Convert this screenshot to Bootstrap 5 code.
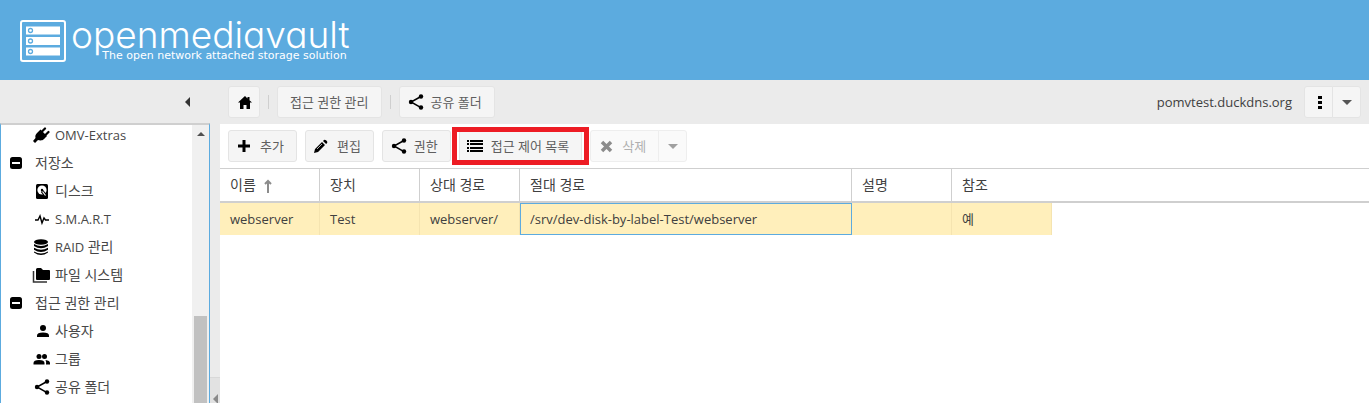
<!DOCTYPE html>
<html lang="ko">
<head>
<meta charset="utf-8">
<meta name="viewport" content="width=device-width, initial-scale=1">
<title>openmediavault</title>
<link href="https://cdn.jsdelivr.net/npm/bootstrap@5.3.0/dist/css/bootstrap.min.css" rel="stylesheet">
<style>
body{font-family:"Open Sans","Noto Sans CJK KR",sans-serif;font-size:13px;line-height:20px;color:#404040;background:#ebebeb}
.brand-bar{height:80px;background:#5cabdf;padding:20px 20px 0;color:#fff}
.brand-title{font-family:Inter,"Liberation Sans",sans-serif;font-feature-settings:"cv11";font-weight:300;font-size:37px;line-height:30px}
.brand-tag{font-family:"DejaVu Sans",sans-serif;font-size:11px;line-height:12px;padding-right:3px}
.side{width:210px}
.bar-top{height:44px}
.tree-box{border:1px solid #5cabdf;border-top:2px solid #cfcfcf;border-bottom:0;background:#fff;margin-top:-1px}
.tree{margin-top:-4px}
.tree a{height:28px;color:#484848;text-decoration:none;padding-left:31px;gap:5px}
.tree a.group{padding-left:6px;gap:12px}
.hangul{font-size:14px}
.tree svg{width:18px;height:18px;flex:none;color:#000}
.tree a.group svg{width:16px;height:16px}
.scroll-track{width:17px;background:#f0f0f0}
.scroll-thumb{background:#c1c1c1;width:13px;height:87px}
.splitter{width:10px}
.split-handle{height:26px;background:#e2e2e2;border-top:1px solid #d8d8d8}
.btn.tool{--bs-btn-bg:#f5f5f5;--bs-btn-color:#5f5f5f;--bs-btn-border-color:#e4e4e4;--bs-btn-disabled-bg:#fafafa;--bs-btn-disabled-color:#b0b0b0;--bs-btn-disabled-border-color:#eeeeee;--bs-btn-disabled-opacity:1;--bs-btn-border-radius:3px;font-size:13px;line-height:20px;height:32px;padding:0 7px;display:inline-flex;align-items:center;gap:6px;white-space:nowrap}
.btn.tool svg{width:18px;height:18px;color:#000;flex:none}
.btn.tool:disabled svg{color:#8c8c8c}
.btn.tool.wide{padding-right:12px}
.btn.tool.plain{padding:0 12px}
.btn.tool.square{width:32px;padding:0;justify-content:center}
.btn.tool.half{width:29px;padding:0;justify-content:center}
.sep{width:1px;height:14px;background:#cfcfcf}
.marked{position:relative}
.marked::after{content:"";position:absolute;inset:-3px -7px;border:5px solid #ed1c24;pointer-events:none}
.shares{table-layout:fixed;border-collapse:separate;border-spacing:0;border-top:1px solid #cfcfcf}
.shares th{height:34px;font-weight:400;font-size:14px;padding:0 10px;border-right:1px solid #cfcfcf;border-bottom:2px solid #cfcfcf}
.shares th:nth-last-child(-n+2){border-right:0}
.shares td{height:32px;padding:0 10px;background:#ffefbb;border-right:1px solid #f5e4b0}
.shares td:last-child{background:#fff;border:0}
.shares td.focus-cell{border:1px solid #5cabdf;padding-left:9px}
.c-std{width:100px}.c-path{width:332px}
</style>
</head>
<body class="vh-100 d-flex flex-column overflow-hidden">
<svg class="d-none" xmlns="http://www.w3.org/2000/svg">
<symbol id="share" viewBox="0 0 18 18"><path d="M14 3.500 4 9l10 5.700" fill="none" stroke="currentColor" stroke-width="1.500"/><circle cx="14" cy="3.500" r="2.200"/><circle cx="4" cy="9" r="2.200"/><circle cx="14" cy="14.500" r="2.200"/></symbol>
<symbol id="minus" viewBox="0 0 16 16"><rect x="3" y="2" width="12" height="12" rx="2.500"/><path d="M5 8h8" stroke="#fff" stroke-width="2"/></symbol>
<symbol id="down" viewBox="0 0 18 18"><path d="M4 7h10l-5 5z"/></symbol>
</svg>
<header class="brand-bar d-flex align-items-start gap-1">
<svg width="47" height="43" viewBox="0 0 47 43" aria-hidden="true"><rect x="1" y="1" width="44" height="40" rx="2" fill="none" stroke="#fff" stroke-width="2"/><path d="M6 6.500h34v8H6zm0 10.500h34v8H6zm0 10.500h34v8H6z" fill="#fff"/><g fill="none" stroke="#5cabdf" stroke-width="1.300"><circle cx="10.500" cy="10.500" r="2"/><circle cx="10.500" cy="21" r="2"/><circle cx="10.500" cy="31.500" r="2"/></g></svg>
<div class="text-end"><div class="brand-title">openmediavault</div><div class="brand-tag">The open network attached storage solution</div></div>
</header>
<div class="d-flex flex-grow-1 overflow-hidden">
<aside class="side d-flex flex-column flex-shrink-0">
<div class="bar-top d-flex align-items-center justify-content-end pe-3 flex-shrink-0"><svg width="10" height="12" viewBox="0 0 10 12"><path d="M6 1v10L1 6z" fill="#333"/></svg></div>
<div class="tree-box d-flex flex-grow-1 overflow-hidden">
<nav class="tree flex-grow-1" aria-label="메뉴">
<a href="#" class="d-flex align-items-center"><svg viewBox="0 0 18 18" fill="currentColor"><path d="M5 7 8.500 3.500 15 10l-3 3c-2 2-4.500 1.500-6 1L3 17l-2-2 2.500-3C3 10 3.500 8.500 5 7z"/><path d="M10 5.500 13 2.500M13.500 9l3-3" stroke="currentColor" stroke-width="2.200" stroke-linecap="round"/></svg>OMV-Extras</a>
<a href="#" class="group hangul d-flex align-items-center"><svg><use href="#minus"/></svg><span>저장소</span></a>
<a href="#" class="hangul d-flex align-items-center"><svg viewBox="0 0 18 18"><rect x="4" y="2" width="12" height="15" rx="1.500"/><circle cx="10" cy="8" r="4.600" fill="#fff"/><circle cx="10" cy="8" r="1.200"/><path d="m10 9 4 5" stroke="#000" stroke-width="3"/><path d="m10.500 9.500 3 4" stroke="#fff" stroke-width="1.200"/></svg>디스크</a>
<a href="#" class="d-flex align-items-center"><svg viewBox="0 0 18 18"><path d="M3 10h3l2-4 2 7 2-5 1.500 2H17" fill="none" stroke="#000" stroke-width="1.400"/></svg>S.M.A.R.T</a>
<a href="#" class="d-flex align-items-center"><svg viewBox="0 0 18 18"><ellipse cx="9" cy="4" rx="7" ry="2.800"/><path d="M2 6q7 4 14 0v2q-7 4.500-14 0zM2 9.800q7 4 14 0v2q-7 4.500-14 0zM2 13.500q7 4 14 0v1q-7 5-14 0z"/></svg><span>RAID <span class="hangul">관리</span></span></a>
<a href="#" class="hangul d-flex align-items-center"><svg viewBox="0 0 18 18"><path d="M4 3.500Q4 2 5.500 2H9l2 2h6q1 0 1 1v8q0 1-1 1H5q-1 0-1-1z"/><path d="M1.500 5v11H15" fill="none" stroke="#333" stroke-width="1.500"/></svg>파일 시스템</a>
<a href="#" class="group hangul d-flex align-items-center"><svg><use href="#minus"/></svg><span>접근 권한 관리</span></a>
<a href="#" class="hangul d-flex align-items-center"><svg viewBox="0 0 18 18"><circle cx="11" cy="6" r="3"/><path d="M5 15v-1.500q0-3 6-3t6 3V15z"/></svg>사용자</a>
<a href="#" class="hangul d-flex align-items-center"><svg viewBox="0 0 18 18"><circle cx="7" cy="6.500" r="2.500"/><circle cx="12.500" cy="6.500" r="2.500"/><path d="M1.500 14.500V13Q1.500 10 7 10t5.500 3v1.500zM14 14.500h4V13q0-2.500-4.500-3 1 1.500.500 4.500z"/></svg>그룹</a>
<a href="#" class="hangul d-flex align-items-center"><svg viewBox="-1 0 18 18"><use href="#share" width="18" height="18"/></svg>공유 폴더</a>
</nav>
<div class="scroll-track d-flex flex-column align-items-center justify-content-between"><svg width="10" height="18" viewBox="0 0 10 18"><path d="M1 11h8L5 7z" fill="#505050"/></svg><div class="scroll-thumb"></div></div>
</div>
</aside>
<div class="splitter flex-shrink-0 d-flex flex-column justify-content-end"><div class="split-handle d-flex align-items-end"><svg width="10" height="10" viewBox="0 0 10 10"><path d="M8 1v10L3 6z" fill="#8a8a8a"/></svg></div></div>
<main class="flex-grow-1 d-flex flex-column overflow-hidden">
<div class="bar-top d-flex align-items-center px-2 gap-2 flex-shrink-0">
<button class="btn tool square" aria-label="홈"><svg viewBox="0 0 18 18" fill="currentColor"><path d="M10 3 3 9.500h2V16h3.500v-4h3v4H15V9.500h2l-2.500-2.300V4h-2v1.500z"/></svg></button>
<span class="sep"></span>
<button class="btn tool plain">접근 권한 관리</button>
<span class="sep"></span>
<button class="btn tool wide"><svg><use href="#share"/></svg>공유 폴더</button>
<span class="ms-auto me-1">pomvtest.duckdns.org</span>
<div class="btn-group"><button class="btn tool half" aria-label="메뉴"><svg viewBox="0 0 18 18"><path d="M8 3h4v3H8zm0 5h4v3H8zm0 5h4v3H8z"/></svg></button><button class="btn tool half" aria-label="더 보기"><svg fill="#555"><use href="#down"/></svg></button></div>
</div>
<div class="bg-white flex-grow-1">
<div class="bar-top d-flex align-items-center px-2 gap-2">
<button class="btn tool wide"><svg viewBox="0 0 18 18"><path d="M6.500 3h3v4.500H14v3H9.500V15h-3v-4.500H2v-3h4.500z"/></svg>추가</button>
<button class="btn tool wide"><svg viewBox="0 0 18 18"><path d="m1 16 1-4 7-7 3 3-7 7zM10 4l1-1q1-.500 2 .300l.800.800q1 1 .300 2l-1 1z"/><path d="m4 12 5-5" stroke="#fff" stroke-width=".7"/></svg>편집</button>
<button class="btn tool wide"><svg><use href="#share"/></svg>권한</button>
<div class="marked"><button class="btn tool wide"><svg viewBox="0 0 18 18"><path d="M0 3h2v2H0zm3 0h13v2H3zM0 6h2v2H0zm3 0h13v2H3zM0 10h2v2H0zm3 0h13v2H3zM0 13h2v2H0zm3 0h13v2H3z"/></svg>접근 제어 목록</button></div>
<div class="btn-group"><button class="btn tool wide" disabled><svg viewBox="0 0 18 18"><path d="m4 5 9 9m0-9-9 9" stroke="currentColor" stroke-width="3.500"/></svg>삭제</button><button class="btn tool half" disabled aria-label="삭제 옵션"><svg fill="#a0a0a0"><use href="#down"/></svg></button></div>
</div>
<table class="shares w-100">
<colgroup><col class="c-std"><col class="c-std"><col class="c-std"><col class="c-path"><col class="c-std"><col class="c-std"><col></colgroup>
<thead><tr><th>이름<svg class="ms-2" width="8" height="14" viewBox="0 0 8 14"><path d="M4 14V2M1 5l3-3 3 3" fill="none" stroke="#8c8c8c" stroke-width="2"/></svg></th><th>장치</th><th>상대 경로</th><th>절대 경로</th><th>설명</th><th>참조</th><th></th></tr></thead>
<tbody><tr><td>webserver</td><td>Test</td><td>webserver/</td><td class="focus-cell">/srv/dev-disk-by-label-Test/webserver</td><td></td><td>예</td><td></td></tr></tbody>
</table>
</div>
</main>
</div>
<script src="https://cdn.jsdelivr.net/npm/bootstrap@5.3.0/dist/js/bootstrap.bundle.min.js"></script>
</body>
</html>
